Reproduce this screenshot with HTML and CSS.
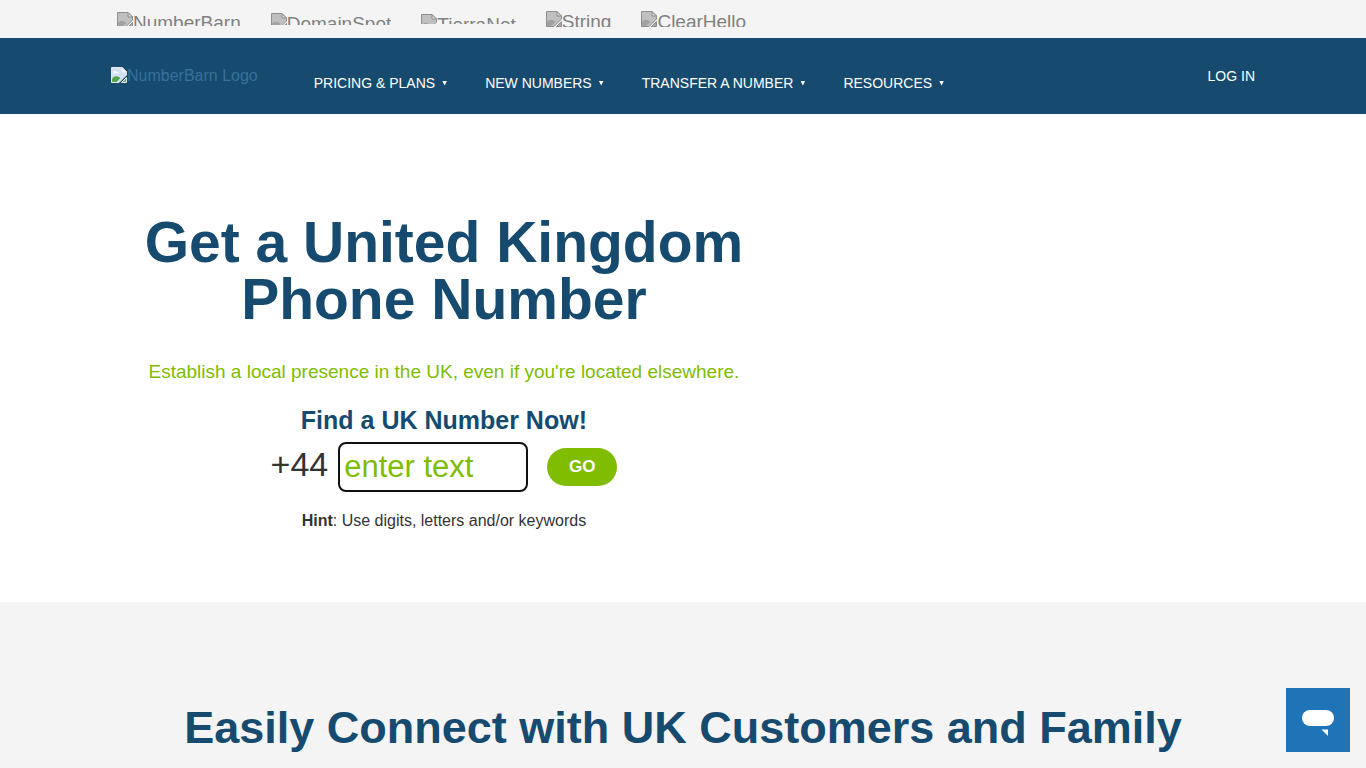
FILE: index.html
```html
<!DOCTYPE html>
<html lang="en">
<head>
  <meta charset="UTF-8" />
  <title>Get a United Kingdom Phone Number | NumberBarn</title>
  <meta name="viewport" content="width=device-width, initial-scale=1.0" />
  <link rel="stylesheet" href="styles.css">
</head>
<body>

  <!-- Shared image icons -->
  <svg class="sprite" aria-hidden="true">
    <symbol id="pic-gray" viewBox="0 0 16 16">
      <path d="M0.5 0.5H11L15.500 5V8L8 15.500H0.5Z" fill="#c0c0c0" stroke="#8e8e8e" />
      <path d="M1 11C3 8 6 8 9.500 11L5 15H1Z" fill="#a2a2a2" />
      <path d="M11 0.500V5H15.500Z" fill="#d8d8d8" stroke="#8e8e8e" />
      <path d="M15.500 10.500V15.500H10.500Z" fill="#a8a8a8" stroke="#8e8e8e" />
    </symbol>
    <symbol id="pic-color" viewBox="0 0 16 16">
      <path d="M0.5 0.5H11L15.500 5V8L8 15.500H0.5Z" fill="#d3e0f6" stroke="#e4e8ea" />
      <path d="M1 12C3 8.500 6 8.500 9.500 11L5.500 15H1Z" fill="#55a545" />
      <path d="M2.500 6a1.500 1.500 0 0 1 3-1a1.500 1.500 0 0 1 2 1.500H2.500Z" fill="#fff" />
      <path d="M11 0.500V5H15.500Z" fill="#fff" stroke="#e4e8ea" />
      <path d="M15.500 10.500V15.500H10.500Z" fill="#79aa74" stroke="#e4e8ea" />
    </symbol>
  </svg>

  <div class="brand-bar">
    <div class="container brands">
      <a href="#" class="brand brand-md"><svg class="pic"><use href="#pic-gray" /></svg>NumberBarn</a>
      <a href="#" class="brand brand-sm"><svg class="pic"><use href="#pic-gray" /></svg>DomainSpot</a>
      <a href="#" class="brand brand-xs"><svg class="pic"><use href="#pic-gray" /></svg>TierraNet</a>
      <a href="#" class="brand brand-lg"><svg class="pic"><use href="#pic-gray" /></svg>String</a>
      <a href="#" class="brand brand-lg"><svg class="pic"><use href="#pic-gray" /></svg>ClearHello</a>
    </div>
  </div>

  <header class="site-header">
    <div class="container header-row">
      <a href="#" class="logo"><svg class="pic"><use href="#pic-color" /></svg>NumberBarn Logo</a>
      <nav class="main-nav">
        <a href="#" class="nav-link">PRICING &amp; PLANS<span class="caret"></span></a>
        <a href="#" class="nav-link">NEW NUMBERS<span class="caret"></span></a>
        <a href="#" class="nav-link">TRANSFER A NUMBER<span class="caret"></span></a>
        <a href="#" class="nav-link">RESOURCES<span class="caret"></span></a>
      </nav>
      <a href="#" class="login">LOG IN</a>
    </div>
  </header>

  <main>
    <section class="hero">
      <div class="container">
        <div class="hero-text">
          <h1>Get a United Kingdom Phone Number</h1>
          <p class="tagline">Establish a local presence in the UK, even if you're located elsewhere.</p>
          <h3>Find a UK Number Now!</h3>
          <form class="search">
            <label class="prefix" for="number-search">+44</label>
            <input type="text" id="number-search" class="search-input" placeholder="enter text" />
            <button type="submit" class="go-btn">GO</button>
          </form>
          <p class="hint"><b>Hint</b>: Use digits, letters and/or keywords</p>
        </div>
      </div>
    </section>

    <section class="connect">
      <div class="container">
        <h2>Easily Connect with UK Customers and Family</h2>
      </div>
    </section>
  </main>

  <!-- Chat launcher -->
  <button type="button" class="chat-btn" aria-label="Chat">
    <svg width="32" height="28" viewBox="0 0 32 28" aria-hidden="true">
      <rect x="0" y="1" width="32" height="16" rx="8" fill="#fff" />
      <path d="M19.500 20.500H26V27Z" fill="#fff" />
    </svg>
  </button>

</body>
</html>
```
FILE: styles.css
```css
* {
  box-sizing: border-box;
}

body {
  margin: 0;
  min-height: 100vh;
  display: flex;
  flex-direction: column;
  font-family: "Liberation Sans", Arial, sans-serif;
  font-size: 16px;
  color: #333;
  background-color: #fff;
}

a {
  text-decoration: none;
}

h1, h2, h3, p {
  margin: 0;
}

h1, h2, h3 {
  color: #164b6f;
  font-weight: bold;
}

.sprite {
  position: absolute;
  width: 0;
  height: 0;
}

.container {
  width: 100%;
  max-width: 1144px;
  margin: 0 auto;
}

.pic {
  display: inline-block;
  width: 16px;
  height: 16px;
  flex: none;
}

/* top brand strip */
.brand-bar {
  background-color: #f4f4f4;
}

.brands {
  display: flex;
  align-items: center;
  gap: 30px;
  height: 38px;
  padding: 0 6px;
}

.brand {
  display: flex;
  align-items: flex-start;
  overflow: hidden;
  font-size: 19px;
  line-height: 22px;
  color: #808080;
}

.brand-xs {
  height: 10px;
}

.brand-sm {
  height: 12px;
}

.brand-md {
  height: 14px;
}

.brand-lg {
  height: 16px;
}

/* header */
.site-header {
  background-color: #164b6f;
}

.header-row {
  display: flex;
  align-items: center;
  height: 76px;
}

.logo {
  display: flex;
  align-items: flex-start;
  color: #36709b;
}

.main-nav {
  display: flex;
  gap: 38px;
  margin-left: 56px;
  padding-top: 14px;
}

.nav-link {
  display: flex;
  align-items: center;
  gap: 7px;
  font-size: 14px;
  color: #fff;
}

.caret {
  width: 5px;
  height: 5px;
  background-color: #fff;
  clip-path: polygon(0 0, 100% 0, 50% 100%);
}

.login {
  margin-left: auto;
  font-size: 14px;
  color: #fff;
}

/* hero */
main {
  display: flex;
  flex: 1;
  flex-direction: column;
}

.hero {
  padding: 100px 0 71px;
}

.hero-text {
  width: 58.2%;
  text-align: center;
}

h1 {
  padding: 0 30px;
  font-size: 57px;
  line-height: 57px;
}

.tagline {
  margin-top: 32px;
  font-size: 19px;
  line-height: 24px;
  color: #80bc00;
}

h3 {
  margin-top: 20px;
  font-size: 25px;
  line-height: 32px;
}

.search {
  display: flex;
  align-items: center;
  justify-content: center;
  margin-top: 6px;
}

.prefix {
  padding-bottom: 6px;
  font-size: 34px;
}

.search-input {
  width: 190px;
  height: 50px;
  margin: 0 19px 0 10px;
  padding: 0 4px;
  border: 2px solid #101010;
  border-radius: 8px;
  font-family: inherit;
  font-size: 31px;
  color: #80bc00;
  background-color: #fff;
}

.search-input::placeholder {
  color: #80bc00;
}

.go-btn {
  width: 70px;
  height: 38px;
  padding: 0;
  border: none;
  border-radius: 19px;
  font-family: inherit;
  font-size: 17px;
  font-weight: bold;
  color: #fff;
  background-color: #80bc00;
  cursor: pointer;
}

.hint {
  margin-top: 19px;
  line-height: 20px;
}

/* connect */
.connect {
  flex: 1;
  padding: 101px 0 12px;
  background-color: #f4f4f4;
  text-align: center;
}

h2 {
  font-size: 45px;
  line-height: 50px;
}

.chat-btn {
  position: fixed;
  right: 16px;
  bottom: 16px;
  display: flex;
  align-items: center;
  justify-content: center;
  width: 64px;
  height: 64px;
  padding: 6px 0 0;
  border: none;
  background-color: #1f73b7;
  cursor: pointer;
}
```
